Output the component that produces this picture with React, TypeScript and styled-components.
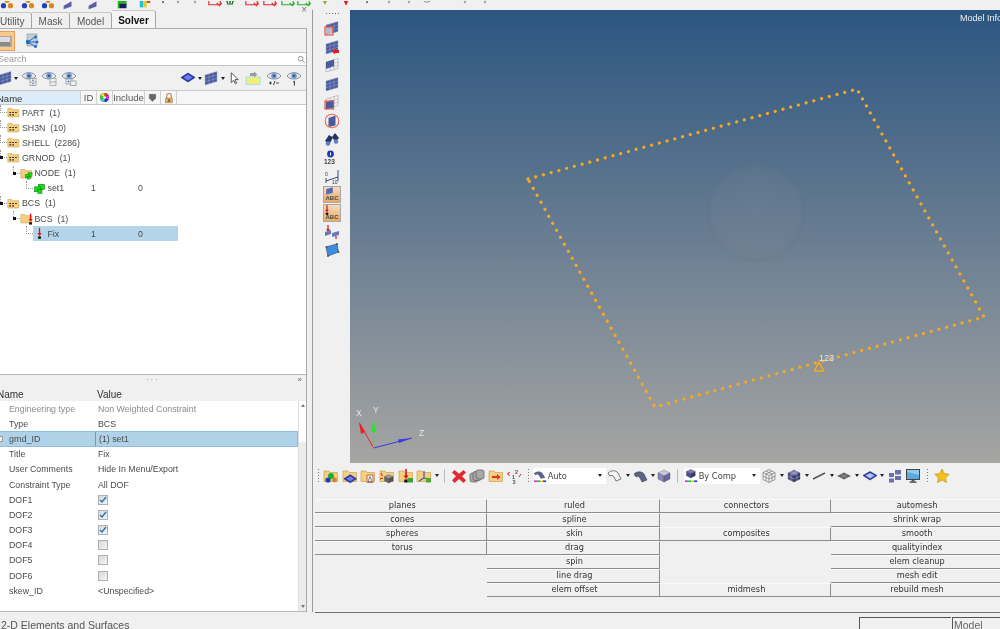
import React from "react";
import styled, { createGlobalStyle } from "styled-components";

const Global = createGlobalStyle`
  html, body { margin: 0; padding: 0; background: #f0f0f0; }
  body { font-family: "Liberation Sans", Arial, sans-serif; overflow: hidden; }
`;

const S = (p: { children: React.ReactNode; s?: number }) => (
  <svg width={p.s ?? 16} height={p.s ?? 16} viewBox="0 0 16 16" style={{ display: "block", flex: "none" }}>
    {p.children}
  </svg>
);

const folder = <path d="M1 3h5l1 1.5h7.5v9H1z" fill="#f5cf80" stroke="#c9a04e" strokeWidth=".7" />;
const mesh = (
  <g stroke="#9fa8d0" strokeWidth=".5">
    <path d="M2 5l12-3.5v10L2 15z" fill="#4a5a9c" />
    <path d="M6 4v9.8M10 2.7v10M2 8.4l12-3.4M2 11.7l12-3.4" fill="none" />
  </g>
);
const wire = (
  <g stroke="#a0a0a8" strokeWidth=".6" fill="#f4f4f6">
    <path d="M2 5l12-3.5v10L2 15z" />
    <path d="M6 4v9.8M10 2.7v10M2 8.4l12-3.4M2 11.7l12-3.4" fill="none" />
  </g>
);
const eye = (
  <g>
    <path d="M1 6c3-4.5 11-4.5 14 0-3 4-11 4-14 0z" fill="#e4e8f0" stroke="#7a8492" strokeWidth=".9" />
    <circle cx="8" cy="5.8" r="2.8" fill="#6f97c8" />
    <circle cx="8" cy="5.8" r="1.1" fill="#2f4a72" />
  </g>
);
const cube = (c1: string, c2: string, c3: string) => (
  <g stroke="#333" strokeWidth=".3">
    <path d="M8 2l6 3-6 3-6-3z" fill={c1} />
    <path d="M2 5l6 3v6l-6-3z" fill={c2} />
    <path d="M14 5l-6 3v6l6-3z" fill={c3} />
  </g>
);
const flat = (
  <g>
    <path d="M8 3l7 4.5-7 4.5-7-4.5z" fill="#2538c0" stroke="#10186a" strokeWidth=".6" />
    <path d="M8 4.6l4.5 2.9L8 10.4 3.5 7.5z" fill="#6b7ce8" />
  </g>
);
const arrow = (
  <g>
    <path d="M8 1v8" stroke="#e01010" strokeWidth="1.6" />
    <path d="M5.5 7.5L8 11l2.5-3.5z" fill="#e01010" />
    <rect x="6.3" y="11.5" width="3.4" height="3" fill="#111" />
  </g>
);
const setGreen = (
  <g stroke="#067006" strokeWidth=".7" fill="#12e012">
    <rect x="7" y="3" width="7" height="6" />
    <rect x="2" y="6" width="7" height="6" />
    <rect x="6" y="9" width="5" height="5" />
  </g>
);
const treeFolder = (
  <g>
    {folder}
    <path d="M3 8h2M6.5 8h2M10 8h2M3 11h2M6.5 11h2" stroke="#222" strokeWidth="1.5" />
  </g>
);

const icons: Record<string, React.ReactNode> = {
  treeFolder,
  nodeFolder: (
    <g>
      {folder}
      <g transform="translate(5 5) scale(.7)">{setGreen}</g>
    </g>
  ),
  bcFolder: (
    <g>
      {folder}
      <g transform="translate(5 1)">{arrow}</g>
    </g>
  ),
  setGreen,
  fix: arrow,
  mesh,
  wire,
  cubeBlue: flat,
  cursor: <path d="M4 1l0 12 3-3 2 4.5 1.6-.8-2-4.4h4z" fill="#fff" stroke="#222" strokeWidth=".9" />,
  yellow: (
    <g>
      <rect x="1" y="7" width="14" height="7.5" fill="#f4ee70" stroke="#a6e6ee" strokeWidth="1.2" />
      <path d="M5 3h4v-1.5l3.5 3-3.5 3v-1.5H5z" fill="#9a9a9a" />
    </g>
  ),
  eyeList: (
    <g>
      {eye}
      <rect x="9" y="8.5" width="6" height="7" fill="#f4f4f4" stroke="#8a8a8a" strokeWidth=".7" />
      <path d="M9 12h6" stroke="#8a8a8a" strokeWidth=".7" />
      <circle cx="12" cy="10.3" r=".8" fill="#3a70b0" />
      <circle cx="12" cy="13.8" r=".8" fill="#3a70b0" />
    </g>
  ),
  eyeTree: (
    <g>
      {eye}
      <rect x="9" y="8.5" width="6" height="7" fill="#f0f0f0" stroke="#9a9a9a" strokeWidth=".7" />
      <path d="M9 12h6" stroke="#9a9a9a" strokeWidth=".7" />
    </g>
  ),
  eyeCopy: (
    <g>
      {eye}
      <rect x="5" y="9" width="6" height="5" fill="#f0f0f0" stroke="#8a8a8a" strokeWidth=".7" />
      <rect x="9.5" y="11" width="5.5" height="4.5" fill="#f0f0f0" stroke="#8a8a8a" strokeWidth=".7" />
      <circle cx="7.5" cy="11.5" r=".9" fill="#3a70b0" />
    </g>
  ),
  eyePm: (
    <g>
      {eye}
      <path d="M3 13h3M4.5 11.5v3M7.5 15l1.5-4M10 13h3" stroke="#333" strokeWidth=".9" />
    </g>
  ),
  eyeOne: (
    <g>
      {eye}
      <path d="M7.2 12l1.2-.9V15.5" stroke="#333" strokeWidth="1" fill="none" />
    </g>
  ),
  drawer: (
    <g>
      <path d="M0 3h16v11H0z" fill="#a8a8a8" />
      <path d="M0 4h14v5H0z" fill="#dcdcdc" />
      <path d="M0 9h14v4H0z" fill="#8a8a8a" />
    </g>
  ),
  network: (
    <g>
      <rect x="3" y="1" width="10" height="12" fill="#c8ccd0" stroke="#90949a" strokeWidth=".6" />
      <path d="M4 9l7-5M4 9l8 0M4 9l7 4.5" stroke="#1a70d0" strokeWidth="1" />
      <circle cx="4" cy="9" r="2.2" fill="#1a70d0" />
      <circle cx="11.5" cy="4" r="1.5" fill="#1a70d0" />
      <circle cx="13" cy="9" r="1.5" fill="#1a70d0" />
      <circle cx="11.5" cy="13.5" r="1.5" fill="#1a70d0" />
    </g>
  ),
  glass: (
    <g fill="none" stroke="#666" strokeWidth="1.2">
      <circle cx="6.5" cy="6.5" r="4.2" />
      <path d="M9.8 9.8l4 4" />
    </g>
  ),
  wheel: (
    <g>
      <circle cx="8" cy="8" r="6.5" fill="#111" />
      <path d="M8 8V1.5a6.5 6.5 0 0 1 5.6 3.2z" fill="#e33" />
      <path d="M8 8l5.6-3.3a6.5 6.5 0 0 1 0 6.6z" fill="#e3e" />
      <path d="M8 8l5.6 3.3A6.5 6.5 0 0 1 8 14.5z" fill="#33e" />
      <path d="M8 8v6.5a6.5 6.5 0 0 1-5.6-3.2z" fill="#3dd" />
      <path d="M8 8L2.4 11.3a6.5 6.5 0 0 1 0-6.6z" fill="#3d3" />
      <path d="M8 8L2.4 4.7A6.5 6.5 0 0 1 8 1.5z" fill="#ee3" />
      <circle cx="8" cy="8" r="2" fill="#fff" />
    </g>
  ),
  shield: <path d="M3 3h10v6l-5 5-5-5z" fill="#666" stroke="#aaa" strokeWidth=".6" />,
  lock: (
    <g>
      <path d="M5 8V5a3 3 0 0 1 6 0v3" fill="none" stroke="#b08c50" strokeWidth="1.4" />
      <rect x="3.5" y="8" width="9" height="6.5" fill="#d8a868" stroke="#a07840" strokeWidth=".6" />
      <rect x="7" y="10" width="2" height="3" fill="#6b4a20" />
    </g>
  ),
  f1: (
    <g>
      {folder}
      <circle cx="8" cy="8" r="3" fill="#18b030" />
      <circle cx="5" cy="12" r="2.6" fill="#2040c0" />
      <circle cx="11.5" cy="12" r="2.4" fill="#c88a20" />
    </g>
  ),
  f2: (
    <g>
      {folder}
      <g transform="translate(1 4) scale(.9)">{flat}</g>
    </g>
  ),
  f3: (
    <g>
      {folder}
      <path d="M7 7h6v7.5H7z" fill="#f4f0e8" stroke="#b05040" strokeWidth=".8" />
      <path d="M10 8.5l-2 5h4z" fill="none" stroke="#555" strokeWidth=".7" />
    </g>
  ),
  f4: (
    <g>
      {folder}
      <path d="M2 5l1.5 3M1 11l3-1" stroke="#d02020" strokeWidth="1" />
      <g transform="translate(4 5) scale(.72)">{cube("#9a9a9a", "#666", "#555")}</g>
    </g>
  ),
  f5: (
    <g>
      {folder}
      <g transform="translate(0 0)">{arrow}</g>
      <rect x="9.5" y="10" width="5.5" height="4.5" fill="#40a040" />
    </g>
  ),
  f6: (
    <g>
      {folder}
      <path d="M8 3v7L3 13M8 10l5 1" stroke="#3a50b0" strokeWidth="1.1" fill="none" />
      <rect x="10" y="10" width="5" height="4.5" fill="#50a830" />
    </g>
  ),
  redX: <path d="M3.5 2L8 5.8 12.5 2 15 4.5 11 8.2l4 4L12.5 15 8 11 3.5 15 1 12.2l4-4-4-3.7z" fill="#e02a30" />,
  plates: (
    <g fill="#a8a8a8" stroke="#666" strokeWidth=".8">
      <rect x="1" y="5" width="8" height="9" rx="2" />
      <rect x="4" y="3.5" width="8" height="9" rx="2" />
      <rect x="7" y="2" width="8" height="9" rx="2" />
    </g>
  ),
  folderRed: (
    <g>
      {folder}
      <path d="M4 8h5V6l3.5 3L9 12v-2H4z" fill="#e03030" />
    </g>
  ),
  renumber: (
    <g>
      <text x="9" y="6" fontSize="5.5" fontFamily="Liberation Sans" fontWeight="700" fill="#555">2</text>
      <text x="6" y="11" fontSize="5.5" fontFamily="Liberation Sans" fontWeight="700" fill="#555">1</text>
      <text x="6.5" y="16" fontSize="5.5" fontFamily="Liberation Sans" fontWeight="700" fill="#555">3</text>
      <path d="M1 6l3-2M2 6l1.5 2M13 9l2-3" stroke="#e02020" strokeWidth="1" />
    </g>
  ),
  surfOutline: <path d="M1 5c3-3 8-3 10 0l3 6-5 2-2-4c-1-2-3-2-4-1z" fill="#f4f4f4" stroke="#777" strokeWidth="1" />,
  surfSolid: <path d="M1 6c3-3 8-3 10 0l3 6-5 2-2-4c-1-2-3-2-4-1z" fill="#5a6488" stroke="#333" strokeWidth=".5" />,
  surfCombo: (
    <g>
      <path d="M1 5c3-3 8-3 10 0l3 5-5 1-2-3c-1-2-3-2-4-1z" fill="#5a6488" />
      <path d="M1 13h3.5v2H1z" fill="#d030d0" />
      <path d="M4.5 13H8v2H4.5z" fill="#20c040" />
      <path d="M8 13h3.5v2H8z" fill="#e0d020" />
      <path d="M11.5 13H15v2h-3.5z" fill="#2040e0" />
    </g>
  ),
  cubeCombo: (
    <g>
      <g transform="translate(1 -1.5) scale(.85)">{cube("#7c7cb0", "#4c4c88", "#38386c")}</g>
      <path d="M1 13h3.5v2H1z" fill="#d030d0" />
      <path d="M4.5 13H8v2H4.5z" fill="#20c040" />
      <path d="M8 13h3.5v2H8z" fill="#e0d020" />
      <path d="M11.5 13H15v2h-3.5z" fill="#2040e0" />
    </g>
  ),
  cubeSoft: cube("#c8c8e0", "#8a8ab8", "#6868a0"),
  cubeDark: cube("#8080b0", "#505088", "#3c3c70"),
  cubeWire: (
    <g fill="none" stroke="#777" strokeWidth=".7">
      <path d="M8 1.5l6 3v7l-6 3-6-3v-7zM2 4.5l6 3 6-3M8 7.5v7M5 3l6 3v7M11 3L5 6v7M2 8l6 3 6-3" />
    </g>
  ),
  cubeGrid: (
    <g>
      {cube("#7c7cb0", "#4c4c88", "#38386c")}
      <path d="M5 3.5l6 3v6.5M11 3.5L5 6.5v6.5M2 8l6 3 6-3" fill="none" stroke="#b8b8d8" strokeWidth=".5" />
    </g>
  ),
  line: <path d="M2 11L14 5" stroke="#555" strokeWidth="1.4" />,
  plateGrey: (
    <g>
      <path d="M8 4.5l7 3.5-7 3.5-7-3.5z" fill="#666" />
      <path d="M4.5 6.2l7 3.6M11.5 6.2l-7 3.6" stroke="#aaa" strokeWidth=".5" />
    </g>
  ),
  plateBlue: (
    <g>
      <path d="M8 3.5l7 4-7 4.5-7-4.5z" fill="#2438b0" stroke="#111a60" strokeWidth=".5" />
      <path d="M8 5l4.6 2.6L8 10.4 3.4 7.6z" fill="#b8c4f0" />
    </g>
  ),
  tiles: (
    <g fill="#6a70b0">
      <rect x="8" y="2" width="6" height="4.5" />
      <rect x="2" y="5" width="5" height="4" />
      <rect x="8" y="8" width="6" height="4" />
      <rect x="2" y="10.5" width="5" height="4" />
    </g>
  ),
  monitor: (
    <g>
      <rect x="1.5" y="1.5" width="13" height="10" fill="#5aa8dc" stroke="#444" strokeWidth="1" />
      <path d="M2 2h12v5L2 4z" fill="#8ccaee" />
      <rect x="6.5" y="12" width="3" height="1.5" fill="#555" />
      <rect x="4.5" y="13.5" width="7" height="1.2" fill="#333" />
    </g>
  ),
  star: <path d="M8 1l2.2 4.6 5 .7-3.6 3.5.9 5L8 12l-4.5 2.8.9-5L.8 6.3l5-.7z" fill="#f2c018" stroke="#b88a10" strokeWidth=".6" />,
  mBox: (
    <g>
      {mesh}
      <rect x="1" y="7" width="8" height="8" fill="#d8d8e4" fillOpacity=".7" stroke="#ee4a30" strokeWidth="1.1" />
    </g>
  ),
  mRed: (
    <g>
      {mesh}
      <path d="M8 12.5l3-3v1.5h4v3h-4V15.5z" fill="#e02020" />
    </g>
  ),
  mWire: (
    <g>
      {wire}
      <path d="M2 5l8-2.4V9L2 11.7z" fill="#4a5a9c" />
    </g>
  ),
  mMesh: mesh,
  mWireBox: (
    <g>
      {wire}
      <path d="M2 8l7-2v8l-7 1z" fill="#4a5a9c" />
      <rect x="1" y="7" width="8.5" height="8" fill="none" stroke="#ee4a30" strokeWidth="1.1" />
    </g>
  ),
  mCircle: (
    <g>
      <path d="M4.5 5l7-2.5v10l-7 1.5z" fill="#4a5a9c" />
      <circle cx="8" cy="8" r="6.8" fill="none" stroke="#f06a50" strokeWidth="1.1" />
    </g>
  ),
  binoc: (
    <g fill="#23345e">
      <path d="M1 10l4-6 4 2.5L5.5 13z" />
      <path d="M8 6l3-4 4 5-3.5 4z" />
      <circle cx="4" cy="12.5" r="2.3" fill="#5a80c0" />
      <circle cx="12" cy="10.5" r="2.3" fill="#5a80c0" />
    </g>
  ),
  info123: (
    <g>
      <circle cx="6.5" cy="4" r="3.4" fill="#2038b0" />
      <rect x="6" y="2.5" width="1" height="3" fill="#fff" />
      <text x="0" y="14" fontSize="6.5" fontWeight="700" fontFamily="Liberation Sans" fill="#444">123</text>
    </g>
  ),
  ruler: (
    <g>
      <path d="M2 13l12-4V2" stroke="#3c4a84" strokeWidth="1" fill="none" />
      <path d="M2 10v5M14 9v4" stroke="#3c4a84" strokeWidth="1" />
      <text x="1" y="8" fontSize="5" fontFamily="Liberation Sans" fill="#333">0</text>
      <text x="8" y="16" fontSize="5" fontFamily="Liberation Sans" fill="#333">10</text>
    </g>
  ),
  meshAbc: <path d="M2 3l7-2v6l-7 2z" fill="#5a68a8" stroke="#d8dcf0" strokeWidth=".4" />,
  arrowAbc: <g transform="translate(-3 -1) scale(.75)">{arrow}</g>,
  moveMesh: (
    <g>
      <path d="M4 1v5" stroke="#e02020" strokeWidth="1.3" />
      <path d="M2 5h4l-2 3z" fill="#e02020" />
      <path d="M1 8l6-2v4l-6 2z" fill="#6a78b8" />
      <path d="M8 9l7-2v4l-7 2z" fill="#6a78b8" />
      <path d="M12 12v3" stroke="#e02020" strokeWidth="1.3" />
    </g>
  ),
  blueCard: (
    <g>
      <path d="M2 5l11-3 1.5 8L4 14z" fill="#3a8ee0" stroke="#4a5a78" strokeWidth=".8" />
      <circle cx="2.5" cy="5" r="1" fill="#555" />
      <circle cx="13" cy="2" r="1" fill="#555" />
      <circle cx="14.5" cy="10" r="1" fill="#555" />
      <circle cx="4" cy="14" r="1" fill="#555" />
    </g>
  ),
  cluster: (
    <g>
      <circle cx="8" cy="5" r="3" fill="#c89020" />
      <circle cx="4" cy="11" r="3" fill="#2040c0" />
      <circle cx="12" cy="11" r="3" fill="#d88a18" />
    </g>
  ),
  purple: <path d="M3 11l9-5v6l-9 3z" fill="#5a60a8" />,
  greenRain: (
    <g>
      <path d="M2 2h10v8l-8 4H2z" fill="#20b020" />
      <rect x="4" y="9" width="8" height="5" fill="#1a1a60" />
    </g>
  ),
  rainbow: (
    <g>
      <rect x="2" y="2" width="4" height="11" fill="#20c0e0" />
      <rect x="6" y="2" width="4" height="11" fill="#e0d020" />
      <rect x="10" y="2" width="4" height="6" fill="#e04020" />
    </g>
  ),
  redRect: <path d="M1 1v9h11M14 1v9h-2M10 8l3 3 3-3" fill="none" stroke="#e03030" strokeWidth="1.4" />,
  greenRect: <path d="M1 1v9h11M14 1v9h-2M10 8l3 3 3-3" fill="none" stroke="#30b030" strokeWidth="1.4" />,
  teeth: <path d="M3 2l3 8M8 2v8M13 2l-3 8" stroke="#207020" strokeWidth="1.6" />,
  heart: <path d="M3 1h10l-5 10z" fill="#e02030" />,
  greenRed: <path d="M3 1h10L8 10z" fill="#a0a040" />,
  tinyDot: <path d="M7 6h2v2H7z" fill="#555" />,
  greyTri: <path d="M4 1h8L8 9z" fill="#9a9ab8" />,
  circleO: <circle cx="8" cy="3" r="4" fill="none" stroke="#999" strokeWidth="1.2" />,
};

const Icon = ({ name, s }: { name: string; s?: number }) => <S s={s}>{icons[name]}</S>;

const Root = styled.div`
  width: 1000px;
  height: 629px;
  display: flex;
  flex-direction: column;
  overflow: hidden;
  background: #f0f0f0;
  color: #444;
  font-size: 9px;
  filter: blur(0.3px);
`;
const TopStrip = styled.div`
  height: 10px;
  flex: none;
  display: flex;
  align-items: flex-end;
  overflow: hidden;
`;
const StripIcon = styled.div<{ $left: number }>`
  flex: none;
  margin-left: ${(p) => p.$left}px;
  height: 9px;
  width: 14px;
  overflow: hidden;
  svg { width: 14px; height: 14px; margin-top: -5px; }
`;
const Main = styled.div`
  flex: none;
  height: 602px;
  display: flex;
`;
const LeftPane = styled.div`
  position: relative;
  flex: none;
  width: 312px;
  border-right: 1px solid #9a9a9a;
  display: flex;
  flex-direction: column;
`;
const CloseMark = styled.span`
  position: absolute;
  right: 5px;
  top: -6px;
  font-size: 10px;
  line-height: 12px;
  color: #777;
`;
const Tabs = styled.div`
  height: 18px;
  flex: none;
  display: flex;
  width: 306px;
  align-items: flex-end;
`;
const Tab = styled.div<{ $active?: boolean; $w: number; $trim?: number }>`
  width: ${(p) => p.$w}px;
  flex: none;
  height: ${(p) => (p.$active ? 18 : 16)}px;
  line-height: ${(p) => (p.$active ? 20 : 18)}px;
  box-sizing: border-box;
  padding-right: ${(p) => p.$trim ?? 0}px;
  border-right: 1px solid #a6a6a6;
  border-top: 1px solid #c8c8c8;
  border-radius: 0 3px 0 0;
  text-align: center;
  font-size: 10px;
  color: ${(p) => (p.$active ? "#111" : "#555")};
  font-weight: ${(p) => (p.$active ? 700 : 400)};
  background: ${(p) => (p.$active ? "#f4f4f4" : "#f0f0f0")};
  white-space: nowrap;
  overflow: hidden;
`;
const Frame = styled.div`
  flex: 1;
  width: 307px;
  min-height: 0;
  box-sizing: border-box;
  border-top: 1px solid #b0b0b0;
  border-right: 1px solid #a8a8a8;
  display: flex;
  flex-direction: column;
`;
const ViewTools = styled.div`
  height: 23px;
  flex: none;
  display: flex;
  align-items: center;
  gap: 9px;
`;
const ActiveTool = styled.div`
  width: 15px;
  height: 20px;
  background: #fcc88c;
  border: 1px solid #e0a060;
  border-left: 0;
  box-sizing: border-box;
  display: flex;
  align-items: center;
  overflow: hidden;
  svg { margin-left: -4px; }
`;
const Search = styled.div`
  height: 12px;
  flex: none;
  box-sizing: content-box;
  background: #fff;
  border-top: 1px solid #c4c4c4;
  border-bottom: 1px solid #c4c4c4;
  display: flex;
  align-items: center;
  justify-content: space-between;
  color: #999;
  font-size: 9px;
  span { margin-left: -2px; }
`;
const Toolbar2 = styled.div`
  height: 24px;
  flex: none;
  display: flex;
  align-items: center;
  justify-content: space-between;
  padding-right: 2px;
`;
const ToolGroup = styled.div`
  display: flex;
  align-items: center;
`;
const Clip = styled.div`
  margin-left: -3px;
`;
const Slot = styled.div<{ $w: number }>`
  flex: none;
  width: ${(p) => p.$w}px;
  display: flex;
  justify-content: center;
  align-items: center;
`;
const Caret = styled.span<{ $w?: number }>`
  flex: none;
  width: ${(p) => p.$w ?? 6}px;
  display: flex;
  justify-content: center;
  &::after {
    content: "";
    border-left: 2.5px solid transparent;
    border-right: 2.5px solid transparent;
    border-top: 3px solid #222;
  }
`;
const TreeHeader = styled.div`
  height: 15px;
  flex: none;
  box-sizing: border-box;
  display: grid;
  grid-template-columns: 81px 16px 16px 32px 16px 16px 1fr;
  border-top: 1px solid #c8c8c8;
  border-bottom: 1px solid #c8c8c8;
  background: #f6f6f6;
`;
const HeaderCell = styled.div<{ $hover?: boolean }>`
  border-right: 1px solid #d0d0d0;
  background: ${(p) => (p.$hover ? "#dcecf8" : "transparent")};
  display: flex;
  align-items: center;
  justify-content: center;
  font-size: 9.5px;
  color: #555;
  line-height: 13px;
  white-space: nowrap;
  overflow: hidden;
`;
const NameHead = styled(HeaderCell)`
  justify-content: flex-start;
  color: #333;
  padding-top: 2px;
  span { margin-left: -3px; }
`;
const Tree = styled.div`
  flex: none;
  height: 270px;
  background: #fff;
  border-bottom: 1px solid #b8b8b8;
  box-sizing: border-box;
`;
const TreeRow = styled.div<{ $level: number }>`
  height: 15.15px;
  display: flex;
  padding-left: ${(p) => p.$level * 13}px;
`;
const Connector = styled.div<{ $branch: boolean; $level: number }>`
  position: relative;
  flex: none;
  width: ${(p) => (p.$level === 0 ? 7 : 6.5)}px;
  height: 8px;
  box-sizing: border-box;
  border-left: 1px dotted #999;
  border-bottom: 1px dotted #999;
  &::after {
    content: "";
    display: ${(p) => (p.$branch ? "block" : "none")};
    position: absolute;
    left: -1px;
    bottom: -2px;
    width: 3px;
    height: 3px;
    background: #111;
  }
`;
const RowBody = styled.div<{ $selected?: boolean; $right: number }>`
  flex: none;
  width: ${(p) => p.$right}px;
  display: flex;
  align-items: center;
  background: ${(p) => (p.$selected ? "#b4d4e9" : "transparent")};
  white-space: pre;
  font-size: 8.8px;
  color: #4a4a4a;
`;
const RowIcon = styled.span`
  flex: none;
  width: 15px;
  display: block;
`;
const RowName = styled.span<{ $w: number }>`
  flex: none;
  width: ${(p) => p.$w}px;
`;
const RowId = styled.span`
  flex: none;
  width: 47px;
`;
const Divider = styled.div`
  height: 10px;
  flex: none;
  display: flex;
  align-items: center;
  justify-content: center;
  position: relative;
  letter-spacing: 2px;
  color: #888;
  font-size: 7px;
  line-height: 10px;
`;
const Chevron = styled.span`
  position: absolute;
  right: 4px;
  top: 0;
  font-size: 8px;
  letter-spacing: 0;
  color: #666;
`;
const PropHead = styled.div`
  height: 16px;
  flex: none;
  display: grid;
  grid-template-columns: 97px 1fr;
  align-items: end;
  font-size: 10px;
  color: #333;
  line-height: 13px;
  span:first-child { margin-left: -3px; }
`;
const PropBody = styled.div`
  flex: 1;
  min-height: 0;
  display: flex;
  background: #fff;
  border-bottom: 1px solid #b8b8b8;
`;
const PropRows = styled.div`
  flex: none;
  width: 298px;
`;
const PropRow = styled.div<{ $selected?: boolean; $muted?: boolean }>`
  height: 15.2px;
  box-sizing: border-box;
  display: grid;
  grid-template-columns: 95px 1fr;
  align-items: center;
  font-size: 8.8px;
  white-space: nowrap;
  color: ${(p) => (p.$muted ? "#8a8a8a" : "#4a4a4a")};
  background: ${(p) => (p.$selected ? "#afd2e8" : "transparent")};
  border: ${(p) => (p.$selected ? "1px solid #93bcd8" : "0")};
  border-width: ${(p) => (p.$selected ? "1px 1px 1px 0" : "0")};
  position: relative;
`;
const PropLabel = styled.span`
  padding-left: 9px;
`;
const PropValue = styled.span<{ $rule?: boolean }>`
  padding-left: 3px;
  height: 100%;
  display: flex;
  align-items: center;
  box-sizing: border-box;
  border-left: ${(p) => (p.$rule ? "1px solid #6a9cc0" : "0")};
`;
const Expander = styled.span`
  position: absolute;
  left: -3px;
  top: 4px;
  width: 6px;
  height: 6px;
  box-sizing: border-box;
  border: 1px solid #9a9a9a;
  background: #eee;
`;
const Check = styled.span`
  width: 10px;
  height: 10px;
  box-sizing: border-box;
  border: 1px solid #b0b0b0;
  background: linear-gradient(135deg, #d8d8d8, #f4f4f4);
  display: flex;
  align-items: center;
  justify-content: center;
`;
const Scrollbar = styled.div`
  flex: 1;
  background: linear-gradient(#fff 0, #fff 41px, #ececec 41px, #ececec 100%);
  border-left: 1px solid #e0e0e0;
  display: flex;
  flex-direction: column;
  justify-content: space-between;
  align-items: center;
  padding: 3px 0;
  box-sizing: border-box;
`;
const ScrollArrow = styled.span<{ $down?: boolean }>`
  border-left: 2.5px solid transparent;
  border-right: 2.5px solid transparent;
  border-${(p) => (p.$down ? "top" : "bottom")}: 3px solid #777;
`;
const RightPane = styled.div`
  flex: 1;
  min-width: 0;
  display: flex;
  flex-direction: column;
  padding-left: 2px;
`;
const ViewRow = styled.div`
  height: 453px;
  flex: none;
  display: flex;
`;
const SideTools = styled.div`
  width: 35px;
  flex: none;
  display: flex;
  flex-direction: column;
  align-items: center;
  padding-top: 2px;
`;
const SideGrip = styled.div`
  height: 7px;
  width: 14px;
  margin-left: -2px;
  background: radial-gradient(circle, #777 .7px, transparent .9px) 0 0 / 3px 3px repeat-x;
`;
const SideBtn = styled.div<{ $active?: boolean }>`
  flex: none;
  width: 18px;
  height: ${(p) => (p.$active ? 17.5 : 18.5)}px;
  margin-bottom: ${(p) => (p.$active ? 1 : 0)}px;
  margin-left: -2px;
  box-sizing: border-box;
  display: flex;
  flex-direction: column;
  align-items: center;
  justify-content: center;
  position: relative;
  background: ${(p) => (p.$active ? "linear-gradient(#f4dcc0, #eda864)" : "transparent")};
  border: ${(p) => (p.$active ? "1px solid #a8a8a8" : "0")};
  overflow: hidden;
`;
const AbcTag = styled.span`
  position: absolute;
  right: 1px;
  bottom: 0;
  font-size: 6px;
  line-height: 7px;
  font-weight: 700;
  color: #444;
`;
const Canvas = styled.div`
  flex: 1;
  position: relative;
  overflow: hidden;
  background: linear-gradient(#2b5580, #a6a5a3);
  svg { display: block; }
`;
const ModelInfo = styled.span`
  position: absolute;
  left: 610px;
  top: 3px;
  color: #f0f0f0;
  font-size: 9px;
  white-space: nowrap;
`;
const BottomBar = styled.div`
  height: 27px;
  flex: none;
  display: flex;
  align-items: center;
  padding-bottom: 2px;
  box-sizing: border-box;
`;
const Grip = styled.div<{ $w: number }>`
  flex: none;
  width: ${(p) => p.$w}px;
  height: 15px;
  background: radial-gradient(circle, #777 .7px, transparent .9px) center / 3px 3px repeat-y;
`;
const Separator = styled.div<{ $w: number }>`
  flex: none;
  width: ${(p) => p.$w}px;
  height: 14px;
  background: linear-gradient(#bcbcbc, #bcbcbc) center / 1px 100% no-repeat;
`;
const Combo = styled.div<{ $w: number }>`
  flex: none;
  width: ${(p) => p.$w}px;
  height: 16px;
  background: #fff;
  display: flex;
  align-items: center;
  color: #444;
  font-family: "DejaVu Sans", sans-serif;
  span:first-of-type { flex: 1; padding-left: 1px; white-space: nowrap; font-size: 8.3px; }
`;
const Menu = styled.div`
  padding-top: 9px;
  height: 113px;
  box-sizing: border-box;
  flex: none;
  display: grid;
  grid-template-columns: 172.4px 172.2px 171.6px 1fr;
  grid-auto-rows: 14px;
  font-family: "DejaVu Sans", sans-serif;
  font-size: 8.2px;
  color: #333;
`;
const MenuCell = styled.div<{ $col: number; $row: number }>`
  grid-column: ${(p) => p.$col};
  grid-row: ${(p) => p.$row};
  box-sizing: border-box;
  display: flex;
  align-items: center;
  justify-content: center;
  line-height: 1;
  padding: 0 0 1px 3px;
  background: #f0f0f0;
  border-top: 1px solid #fafafa;
  border-bottom: 1.5px solid #8c8c8c;
  border-right: ${(p) => (p.$col === 4 ? "0" : "1.5px solid #8c8c8c")};
`;
const Status = styled.div`
  flex: 1;
  display: flex;
  align-items: flex-end;
`;
const StatusText = styled.div`
  width: 315px;
  flex: none;
  height: 17px;
  line-height: 15px;
  font-size: 10.5px;
  color: #555;
  padding: 6px 0 0 1px;
  box-sizing: border-box;
`;
const StatusRight = styled.div`
  flex: 1;
  height: 17px;
  box-sizing: border-box;
  border-top: 1.5px solid #6e6e6e;
  display: flex;
  justify-content: flex-end;
  padding-top: 4px;
`;
const StatusBox = styled.div<{ $w: number }>`
  flex: none;
  width: ${(p) => p.$w}px;
  margin-left: 1px;
  box-sizing: border-box;
  border-left: 1px solid #555;
  border-top: 1px solid #555;
  font-size: 10.5px;
  color: #666;
  padding: 1px 0 0 1px;
  line-height: 13px;
  white-space: nowrap;
  overflow: hidden;
`;

const strip: [string, number][] = [
  ["cluster", 0], ["cluster", 7], ["cluster", 6], ["purple", 6], ["purple", 11], ["greenRain", 16], ["rainbow", 8],
  ["tinyDot", 4], ["greyTri", 1], ["greyTri", 3], ["redRect", 6], ["teeth", 1], ["redRect", 8], ["redRect", 4],
  ["greenRect", 4], ["greenRect", 2], ["greenRed", 7], ["heart", 7], ["tinyDot", 7], ["greyTri", 8], ["greyTri", 6],
  ["circleO", 4], ["greyTri", 24], ["greyTri", 6],
];

const tree = [
  { level: 0, icon: "treeFolder", name: "PART  (1)", branch: false },
  { level: 0, icon: "treeFolder", name: "SH3N  (10)", branch: false },
  { level: 0, icon: "treeFolder", name: "SHELL  (2286)", branch: false },
  { level: 0, icon: "treeFolder", name: "GRNOD  (1)", branch: true },
  { level: 1, icon: "nodeFolder", name: "NODE  (1)", branch: true },
  { level: 2, icon: "setGreen", name: "set1", id: "1", inc: "0", branch: false },
  { level: 0, icon: "treeFolder", name: "BCS  (1)", branch: true },
  { level: 1, icon: "bcFolder", name: "BCS  (1)", branch: true },
  { level: 2, icon: "fix", name: "Fix", id: "1", inc: "0", branch: false, selected: true },
];

const props: { k: string; v?: string; muted?: boolean; selected?: boolean; check?: boolean }[] = [
  { k: "Engineering type", v: "Non Weighted Constraint", muted: true },
  { k: "Type", v: "BCS" },
  { k: "grnd_ID", v: "(1) set1", selected: true },
  { k: "Title", v: "Fix" },
  { k: "User Comments", v: "Hide In Menu/Export" },
  { k: "Constraint Type", v: "All DOF" },
  { k: "DOF1", check: true },
  { k: "DOF2", check: true },
  { k: "DOF3", check: true },
  { k: "DOF4" },
  { k: "DOF5" },
  { k: "DOF6" },
  { k: "skew_ID", v: "<Unspecified>" },
];

const side = ["mBox", "mRed", "mWire", "mMesh", "mWireBox", "mCircle", "binoc", "info123", "ruler"];

const menu: [number, number, string][] = [
  [1, 1, "planes"], [1, 2, "cones"], [1, 3, "spheres"], [1, 4, "torus"],
  [2, 1, "ruled"], [2, 2, "spline"], [2, 3, "skin"], [2, 4, "drag"], [2, 5, "spin"], [2, 6, "line drag"], [2, 7, "elem offset"],
  [3, 1, "connectors"], [3, 3, "composites"], [3, 7, "midmesh"],
  [4, 1, "automesh"], [4, 2, "shrink wrap"], [4, 3, "smooth"], [4, 4, "qualityindex"], [4, 5, "elem cleanup"], [4, 6, "mesh edit"], [4, 7, "rebuild mesh"],
];

export default function App() {
  return (
    <Root>
      <Global />
      <TopStrip>
        {strip.map(([n, l], i) => (
          <StripIcon key={i} $left={l}>
            <Icon name={n} />
          </StripIcon>
        ))}
      </TopStrip>
      <Main>
        <LeftPane>
          <CloseMark>×</CloseMark>
          <Tabs>
            <Tab $w={32} $trim={12}>Utility</Tab>
            <Tab $w={38}>Mask</Tab>
            <Tab $w={42}>Model</Tab>
            <Tab $w={44} $active>Solver</Tab>
          </Tabs>
          <Frame>
            <ViewTools>
              <ActiveTool><Icon name="drawer" /></ActiveTool>
              <Icon name="network" />
            </ViewTools>
            <Search>
              <span>Search</span>
              <Icon name="glass" s={9} />
            </Search>
            <Toolbar2>
              <ToolGroup>
                <Clip><Icon name="mesh" /></Clip>
                <Caret $w={6} />
                <Slot $w={20}><Icon name="eyeList" /></Slot>
                <Slot $w={20}><Icon name="eyeTree" /></Slot>
                <Slot $w={20}><Icon name="eyeCopy" /></Slot>
              </ToolGroup>
              <ToolGroup>
                <Icon name="cubeBlue" />
                <Caret $w={7} />
                <Icon name="mesh" />
                <Caret $w={8} />
                <Slot $w={15}><Icon name="cursor" s={13} /></Slot>
                <Slot $w={22}><Icon name="yellow" /></Slot>
                <Slot $w={20}><Icon name="eyePm" /></Slot>
                <Slot $w={20}><Icon name="eyeOne" /></Slot>
              </ToolGroup>
            </Toolbar2>
            <TreeHeader>
              <NameHead $hover><span>Name</span></NameHead>
              <HeaderCell>ID</HeaderCell>
              <HeaderCell><Icon name="wheel" s={11} /></HeaderCell>
              <HeaderCell>Include</HeaderCell>
              <HeaderCell><Icon name="shield" s={11} /></HeaderCell>
              <HeaderCell><Icon name="lock" s={12} /></HeaderCell>
              <div />
            </TreeHeader>
            <Tree>
              {tree.map((r, i) => {
                const left = r.level * 13 + (r.level === 0 ? 7 : 6.5);
                return (
                  <TreeRow key={i} $level={r.level}>
                    <Connector $branch={r.branch} $level={r.level} />
                    <RowBody $selected={r.selected} $right={178 - left}>
                      <RowIcon><Icon name={r.icon} s={13} /></RowIcon>
                      <RowName $w={91 - left - 15}>{r.name}</RowName>
                      <RowId>{r.id}</RowId>
                      <span>{r.inc}</span>
                    </RowBody>
                  </TreeRow>
                );
              })}
            </Tree>
            <Divider>
              ···
              <Chevron>»</Chevron>
            </Divider>
            <PropHead>
              <span>Name</span>
              <span>Value</span>
            </PropHead>
            <PropBody>
              <PropRows>
                {props.map((p) => (
                  <PropRow key={p.k} $muted={p.muted} $selected={p.selected}>
                    {p.selected && <Expander />}
                    <PropLabel>{p.k}</PropLabel>
                    {p.v !== undefined ? (
                      <PropValue $rule={p.selected}>{p.v}</PropValue>
                    ) : (
                      <PropValue>
                        <Check>
                          {p.check && (
                            <svg width="8" height="8" viewBox="0 0 8 8">
                              <path d="M1 4l2 2 4-5" fill="none" stroke="#2a78b4" strokeWidth="1.5" />
                            </svg>
                          )}
                        </Check>
                      </PropValue>
                    )}
                  </PropRow>
                ))}
              </PropRows>
              <Scrollbar>
                <ScrollArrow />
                <ScrollArrow $down />
              </Scrollbar>
            </PropBody>
          </Frame>
        </LeftPane>
        <RightPane>
          <ViewRow>
            <SideTools>
              <SideGrip />
              {side.map((n) => (
                <SideBtn key={n}><Icon name={n} /></SideBtn>
              ))}
              <SideBtn $active><Icon name="meshAbc" /><AbcTag>ABC</AbcTag></SideBtn>
              <SideBtn $active><Icon name="arrowAbc" /><AbcTag>ABC</AbcTag></SideBtn>
              <SideBtn><Icon name="moveMesh" /></SideBtn>
              <SideBtn><Icon name="blueCard" /></SideBtn>
            </SideTools>
            <Canvas>
              <svg width="650" height="453" viewBox="350 10 650 453">
                <defs>
                  <radialGradient id="sph" cx="50%" cy="50%" r="50%">
                    <stop offset="0" stopColor="#8a8f96" stopOpacity=".14" />
                    <stop offset=".85" stopColor="#7f868e" stopOpacity=".14" />
                    <stop offset="1" stopColor="#5b6a7a" stopOpacity=".16" />
                  </radialGradient>
                </defs>
                <circle cx="756" cy="212" r="50" fill="url(#sph)" />
                <path
                  d="M528 179L857 89L984 317L655 407Z"
                  fill="none"
                  stroke="#f5a823"
                  strokeWidth="3.2"
                  strokeLinecap="round"
                  strokeDasharray="0.01 8"
                />
                <path d="M819 362l4.5 9h-9z" fill="none" stroke="#f5a823" strokeWidth="1.6" />
                <text x="819" y="361" fontSize="9" fill="#e8e8e8" fontFamily="Liberation Sans">123</text>
                <path d="M373.7 448L359.5 423" stroke="#f02020" strokeWidth="1" />
                <path d="M359 422l6 10-4 2z" fill="#f02020" />
                <path d="M373.7 448V420" stroke="#40e040" strokeWidth="1" />
                <path d="M373.7 419l2.5 13h-5z" fill="#30e030" />
                <path d="M373.7 448L412 438" stroke="#3a3ae8" strokeWidth="1" />
                <path d="M412 438l-14 1.5 1 3.5z" fill="#3a3ae8" />
                <g fontSize="8.5" fill="#e6e6e6" fontFamily="Liberation Sans">
                  <text x="356" y="416">X</text>
                  <text x="373" y="413">Y</text>
                  <text x="419" y="436">Z</text>
                </g>
              </svg>
              <ModelInfo>Model Info</ModelInfo>
            </Canvas>
          </ViewRow>
          <BottomBar>
            <Slot $w={7}><Grip $w={3} /></Slot>
            {["f1", "f2", "f3", "f4", "f5", "f6"].map((n) => (
              <Slot key={n} $w={18.6}><Icon name={n} /></Slot>
            ))}
            <Caret $w={6} />
            <Separator $w={9.7} />
            {["redX", "plates", "folderRed", "renumber"].map((n) => (
              <Slot key={n} $w={18.6}><Icon name={n} /></Slot>
            ))}
            <Slot $w={9}><Grip $w={3} /></Slot>
            <Combo $w={73}>
              <Icon name="surfCombo" s={14} />
              <span>Auto</span>
              <Caret $w={11} />
            </Combo>
            <Slot $w={18}><Icon name="surfOutline" /></Slot>
            <Caret $w={8} />
            <Slot $w={18}><Icon name="surfSolid" /></Slot>
            <Caret $w={6} />
            <Slot $w={16}><Icon name="cubeSoft" /></Slot>
            <Separator $w={12} />
            <Combo $w={76}>
              <Icon name="cubeCombo" s={14} />
              <span>By Comp</span>
              <Caret $w={12} />
            </Combo>
            {["cubeWire", "cubeGrid", "line", "plateGrey", "plateBlue"].map((n) => (
              <React.Fragment key={n}>
                <Slot $w={18.6}><Icon name={n} /></Slot>
                <Caret $w={6.6} />
              </React.Fragment>
            ))}
            <Slot $w={18}><Icon name="tiles" /></Slot>
            <Slot $w={19}><Icon name="monitor" /></Slot>
            <Slot $w={10}><Grip $w={3} /></Slot>
            <Slot $w={18}><Icon name="star" /></Slot>
          </BottomBar>
          <Menu>
            {menu.map(([c, r, t]) => (
              <MenuCell key={t} $col={c} $row={r}>{t}</MenuCell>
            ))}
          </Menu>
        </RightPane>
      </Main>
      <Status>
        <StatusText>2-D Elements and Surfaces</StatusText>
        <StatusRight>
          <StatusBox $w={92}>&nbsp;</StatusBox>
          <StatusBox $w={48}>Model</StatusBox>
        </StatusRight>
      </Status>
    </Root>
  );
}
